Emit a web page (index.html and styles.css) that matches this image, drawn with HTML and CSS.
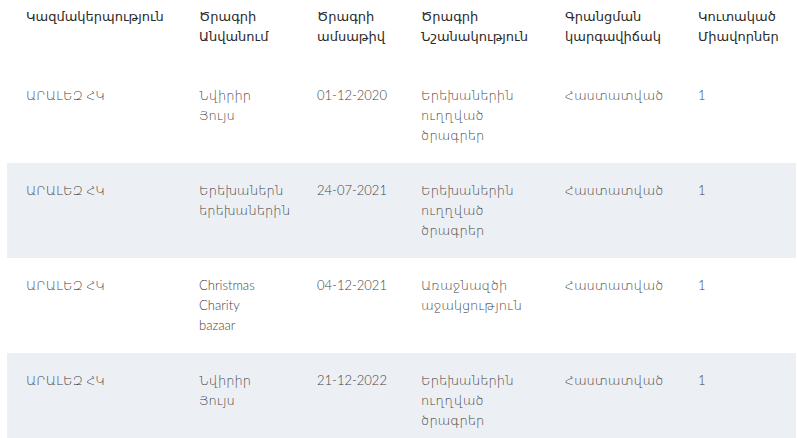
FILE: index.html
```html
<!DOCTYPE html>
<html lang="hy">
<head>
<meta charset="utf-8">
<link rel="stylesheet" href="styles.css">
</head>
<body>
<div class="table">
  <div class="row head">
    <div class="cell c1">Կազմակերպություն</div>
    <div class="cell c2">Ծրագրի Անվանում</div>
    <div class="cell c3">Ծրագրի ամսաթիվ</div>
    <div class="cell c4">Ծրագրի Նշանակություն</div>
    <div class="cell c5">Գրանցման կարգավիճակ</div>
    <div class="cell c6">Կուտակած Միավորներ</div>
  </div>
  <div class="row">
    <div class="cell c1">ԱՐԱԼԵԶ ՀԿ</div>
    <div class="cell c2">Նվիրիր Յույս</div>
    <div class="cell c3">01-12-2020</div>
    <div class="cell c4">Երեխաներին ուղղված ծրագրեր</div>
    <div class="cell c5">Հաստատված</div>
    <div class="cell c6">1</div>
  </div>
  <div class="row alt">
    <div class="cell c1">ԱՐԱԼԵԶ ՀԿ</div>
    <div class="cell c2">Երեխաներն երեխաներին</div>
    <div class="cell c3">24-07-2021</div>
    <div class="cell c4">Երեխաներին ուղղված ծրագրեր</div>
    <div class="cell c5">Հաստատված</div>
    <div class="cell c6">1</div>
  </div>
  <div class="row">
    <div class="cell c1">ԱՐԱԼԵԶ ՀԿ</div>
    <div class="cell c2">Christmas Charity bazaar</div>
    <div class="cell c3">04-12-2021</div>
    <div class="cell c4">Առաջնազծի աջակցություն</div>
    <div class="cell c5">Հաստատված</div>
    <div class="cell c6">1</div>
  </div>
  <div class="row alt">
    <div class="cell c1">ԱՐԱԼԵԶ ՀԿ</div>
    <div class="cell c2">Նվիրիր Յույս</div>
    <div class="cell c3">21-12-2022</div>
    <div class="cell c4">Երեխաներին ուղղված ծրագրեր</div>
    <div class="cell c5">Հաստատված</div>
    <div class="cell c6">1</div>
  </div>
</div>
</body>
</html>
```

FILE: styles.css
```css
html, body {
  margin: 0;
  padding: 0;
  background: #ffffff;
}
body {
  padding: 0 1px 0 7px;
  font-family: "Lato", "DejaVu Sans", sans-serif;
  font-size: 13px;
  color: #444444;
}
.table {
  display: flex;
  flex-direction: column;
}
.row {
  display: grid;
  grid-template-columns: 173px 118px 104px 144px 133px 1fr;
  padding: 17px 0 18px;
  line-height: 20px;
  font-weight: 300;
}
.alt {
  background: #eceff3;
}
.head {
  padding: 7px 0 21px;
  color: #2a2a2a;
}
.head .cell {
  font-weight: 500;
  font-family: "DejaVu Sans", sans-serif;
}
.cell {
  padding-left: 19px;
  padding-right: 12px;
}
.c2 { padding-right: 22px; }
```
